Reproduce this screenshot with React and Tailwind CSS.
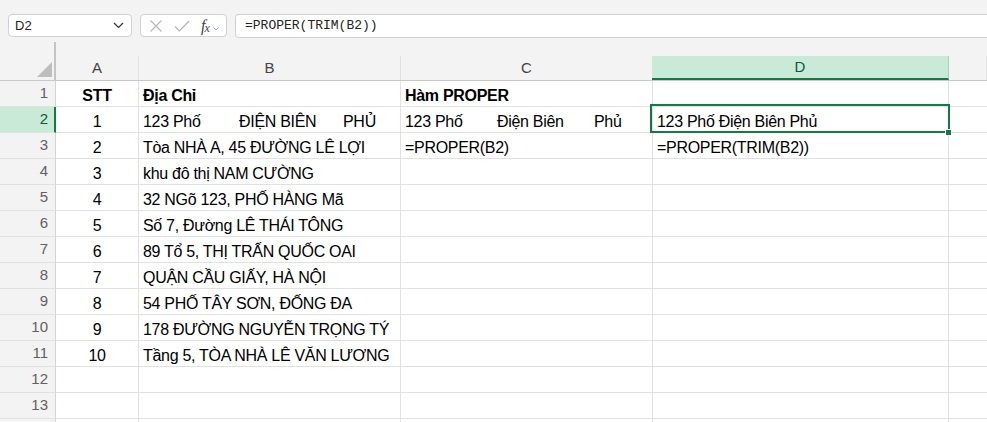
import React from 'react'

const gapped = (parts, widths) => (
  <>
    {parts.map((p, i) => (
      <span key={i} className={i < widths.length ? `inline-block ${widths[i]}` : ''}>
        {p}
      </span>
    ))}
  </>
)

const rows = [
  { n: '1', a: 'STT', b: 'Địa Chỉ', c: 'Hàm PROPER', d: '', bold: true },
  {
    n: '2',
    a: '1',
    b: gapped(['123 Phố ', 'ĐIỆN BIÊN ', 'PHỦ'], ['w-[96px]', 'w-[104px]']),
    c: gapped(['123 Phố ', 'Điện Biên ', 'Phủ'], ['w-[92px]', 'w-[97px]']),
    d: '123 Phố Điện Biên Phủ',
  },
  { n: '3', a: '2', b: 'Tòa NHÀ A, 45 ĐƯỜNG LÊ LỢI', c: '=PROPER(B2)', d: '=PROPER(TRIM(B2))' },
  { n: '4', a: '3', b: 'khu đô thị NAM CƯỜNG' },
  { n: '5', a: '4', b: '32 NGõ 123, PHỐ HÀNG Mã' },
  { n: '6', a: '5', b: 'Số 7, Đường LÊ THÁI TÔNG' },
  { n: '7', a: '6', b: '89 Tổ 5, THỊ TRẤN QUỐC OAI' },
  { n: '8', a: '7', b: 'QUẬN CẦU GIẤY, HÀ NỘI' },
  { n: '9', a: '8', b: '54 PHỐ TÂY SƠN, ĐỐNG ĐA' },
  { n: '10', a: '9', b: '178 ĐƯỜNG NGUYỄN TRỌNG TÝ' },
  { n: '11', a: '10', b: 'Tầng 5, TÒA NHÀ LÊ VĂN LƯƠNG' },
  { n: '12' },
  { n: '13' },
  { n: '' },
]

const cols = ['A', 'B', 'C', 'D', '']

function Cell({ children, center, bold }) {
  return (
    <div
      className={`h-[26px] border-r border-b border-[#e1e1e1] flex items-end pb-[1px] overflow-visible whitespace-pre text-[16px] leading-[18px] tracking-[-0.3px] text-black ${
        center ? 'justify-center' : 'pl-[4px]'
      } ${bold ? 'font-bold' : ''}`}
    >
      {children}
    </div>
  )
}

export default function App() {
  return (
    <div className="relative w-[987px] h-[422px] overflow-hidden bg-white font-['Liberation_Sans',Arial,sans-serif]">
      {/* Toolbar */}
      <div className="h-[42px] bg-[#f3f3f3] flex items-start pt-[14px] pl-[8px] gap-[8px]">
        <div className="w-[124px] h-[23px] bg-white border border-[#d1d1d1] rounded-[4px] flex items-center justify-between pl-[6px] pr-[7px]">
          <span className="text-[13px] text-[#242424]">D2</span>
          <svg width="11" height="7" viewBox="0 0 11 7" fill="none">
            <path d="M1 1l4.5 4.5L10 1" stroke="#333" strokeWidth="1.2" />
          </svg>
        </div>
        <div className="w-[87px] h-[23px] bg-white border border-[#d1d1d1] rounded-[4px] flex items-center pl-[8px] gap-[11px]">
          <svg width="14" height="12" viewBox="0 0 14 12" fill="none">
            <path d="M1.5 0.5l11 11M12.5 0.5l-11 11" stroke="#b5b5b5" strokeWidth="1.1" />
          </svg>
          <svg width="16" height="12" viewBox="0 0 16 12" fill="none">
            <path d="M1 6.5l4.5 4.5L15 1" stroke="#b5b5b5" strokeWidth="1.1" />
          </svg>
          <span className="flex items-end font-['Liberation_Serif',serif] italic text-[#444] leading-none">
            <span className="text-[16px]">f</span>
            <span className="text-[12px] -ml-[1px]">x</span>
            <svg className="ml-[3px] mb-[3px]" width="6" height="4" viewBox="0 0 6 4" fill="none">
              <path d="M0.5 0.5l2.5 2.5L5.5 0.5" stroke="#999" strokeWidth="0.9" />
            </svg>
          </span>
        </div>
        <div className="flex-1 h-[24px] bg-white border-y border-l border-[#d1d1d1] rounded-l-[4px] flex items-center pl-[9px]">
          <span className="font-['Liberation_Mono',monospace] text-[13px] text-[#242424]">=PROPER(TRIM(B2))</span>
        </div>
      </div>

      {/* Sheet */}
      <div className="grid grid-cols-[56px_83px_262px_252px_296px_1fr]">
        {/* Header row */}
        <div className="h-[39px] bg-[#f3f3f3] border-b border-[#c8c8c8] relative">
          <div className="absolute right-0 top-0 w-[2px] h-full bg-[#c4c4c4]" />
          <svg className="absolute left-[36px] top-[20px]" width="16" height="16" viewBox="0 0 16 16">
            <path d="M16 0L16 15L1 15Z" fill="#bdbdbd" />
          </svg>
        </div>
        {cols.map((c) => (
          <div key={c || 'e'} className="h-[39px] bg-[#f3f3f3] border-b border-[#c8c8c8] pt-[14px]">
            {c === 'D' ? (
              <div className="h-full -ml-[1px] bg-[#caead8] border-r border-[#9fd4b6] border-b-2 border-b-[#107c41] flex items-center justify-center text-[15px] text-[#0e5c2f]">
                D
              </div>
            ) : (
              <div className="h-full border-r border-[#e1e1e1] flex items-center justify-center text-[15px] text-[#444]">
                {c}
              </div>
            )}
          </div>
        ))}

        {rows.map((r, i) => (
          <React.Fragment key={i}>
            {r.n === '2' ? (
              <div className="h-[26px] bg-[#caead8] border-b border-[#e1e1e1] border-r-2 border-r-[#107c41] flex items-end justify-end pr-[6px] pb-[2px] text-[15px] text-[#0e5c2f]">
                {r.n}
              </div>
            ) : (
              <div className="h-[26px] bg-[#f3f3f3] border-b border-r border-[#e1e1e1] border-r-[#d4d4d4] flex items-end justify-end pr-[7px] pb-[2px] text-[15px] text-[#616161]">
                {r.n}
              </div>
            )}
            <Cell center bold={r.bold}>{r.a}</Cell>
            <Cell bold={r.bold}>{r.b}</Cell>
            <Cell bold={r.bold}>{r.c}</Cell>
            <Cell>{r.d}</Cell>
            <div className="h-[26px] border-b border-[#e1e1e1]" />
          </React.Fragment>
        ))}
      </div>

      {/* Active cell D2 */}
      <div className="absolute left-[650px] top-[104px] w-[300px] h-[29px] border-2 border-[#107c41] pointer-events-none" />
      <div className="absolute left-[945px] top-[129px] w-[7px] h-[7px] bg-[#107c41] border border-white" />
    </div>
  )
}
